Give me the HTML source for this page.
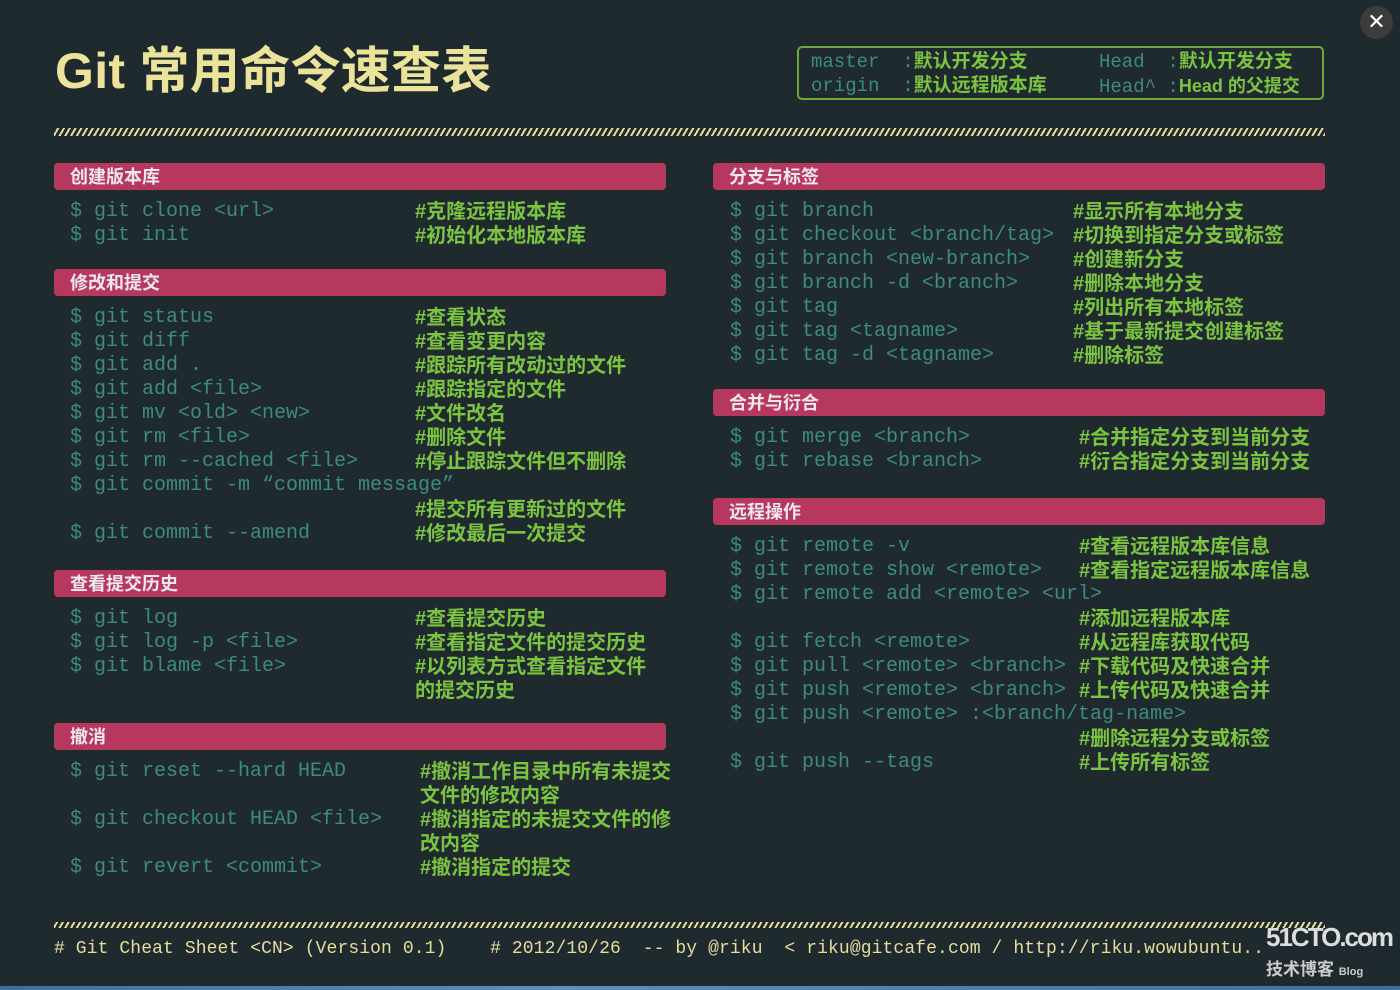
<!DOCTYPE html>
<html><head><meta charset="utf-8">
<style>
*{margin:0;padding:0;box-sizing:border-box}
html,body{width:1400px;height:990px;overflow:hidden;background:#1f2a2f}
body{position:relative;font-family:"Liberation Mono","Noto Sans CJK SC",monospace}
.t{position:absolute;left:55px;top:40px;font-family:"Liberation Sans","Noto Sans CJK SC",sans-serif;font-weight:bold;font-size:50px;color:#ece39b;letter-spacing:0.3px;line-height:62px}
.box{position:absolute;left:797px;top:46px;width:527px;height:54px;border:2px solid #6fa83e;border-radius:5px}
.bx{position:absolute;font-size:19px;line-height:24px;color:#3d8a82;white-space:pre}
.bx b{color:#7cc440;font-family:"Liberation Sans","Noto Sans CJK SC",sans-serif;font-weight:bold;font-size:19px}
.stripe{position:absolute;left:54px;width:1271px;height:8px;background:repeating-linear-gradient(-60deg,#e6dd9c 0 2px,transparent 2px 5px)}
.h{position:absolute;height:27px;background:#b7385f;border-radius:4px;color:#f2e8ee;font-family:"Liberation Sans","Noto Sans CJK SC",sans-serif;font-weight:bold;font-size:18px;line-height:28px;padding-left:16px}
.c{position:absolute;font-size:20px;line-height:24px;color:#3d8a82;white-space:pre;height:24px;margin-top:2px}
.m{position:absolute;font-family:"Liberation Sans","Noto Sans CJK SC",sans-serif;font-weight:bold;font-size:20px;line-height:24px;color:#7cc440;white-space:pre;margin-top:2px}
.f{position:absolute;top:937px;font-size:18px;line-height:24px;color:#e6dd9c;white-space:pre}
.x{position:absolute;left:1360px;top:6px;width:33px;height:33px;border-radius:50%;background:#3b3d3c;color:#fff;font-family:"DejaVu Sans",sans-serif;font-size:22px;line-height:33px;text-align:center}
</style></head><body>
<div class="t">Git 常用命令速查表</div>
<div class="box"></div>
<div class="bx" style="left:811px;top:50px">master  :<b>默认开发分支</b></div>
<div class="bx" style="left:811px;top:74px">origin  :<b>默认远程版本库</b></div>
<div class="bx" style="left:1099px;top:50px">Head  :<b>默认开发分支</b></div>
<div class="bx" style="left:1099px;top:74px">Head^ :<b style="font-size:18px">Head 的父提交</b></div>
<div class="x">✕</div>
<div class="stripe" style="top:128px"></div>

<div class="h" style="left:54px;top:163px;width:612px">创建版本库</div>
<div class="c" style="left:70px;top:198px">$ git clone &lt;url&gt;</div><div class="m" style="left:415px;top:198px">#克隆远程版本库</div>
<div class="c" style="left:70px;top:222px">$ git init</div><div class="m" style="left:415px;top:222px">#初始化本地版本库</div>

<div class="h" style="left:54px;top:269px;width:612px">修改和提交</div>
<div class="c" style="left:70px;top:304px">$ git status</div><div class="m" style="left:415px;top:304px">#查看状态</div>
<div class="c" style="left:70px;top:328px">$ git diff</div><div class="m" style="left:415px;top:328px">#查看变更内容</div>
<div class="c" style="left:70px;top:352px">$ git add .</div><div class="m" style="left:415px;top:352px">#跟踪所有改动过的文件</div>
<div class="c" style="left:70px;top:376px">$ git add &lt;file&gt;</div><div class="m" style="left:415px;top:376px">#跟踪指定的文件</div>
<div class="c" style="left:70px;top:400px">$ git mv &lt;old&gt; &lt;new&gt;</div><div class="m" style="left:415px;top:400px">#文件改名</div>
<div class="c" style="left:70px;top:424px">$ git rm &lt;file&gt;</div><div class="m" style="left:415px;top:424px">#删除文件</div>
<div class="c" style="left:70px;top:448px">$ git rm --cached &lt;file&gt;</div><div class="m" style="left:415px;top:448px">#停止跟踪文件但不删除</div>
<div class="c" style="left:70px;top:472px">$ git commit -m “commit message”</div>
<div class="m" style="left:415px;top:496px">#提交所有更新过的文件</div>
<div class="c" style="left:70px;top:520px">$ git commit --amend</div><div class="m" style="left:415px;top:520px">#修改最后一次提交</div>

<div class="h" style="left:54px;top:570px;width:612px">查看提交历史</div>
<div class="c" style="left:70px;top:605px">$ git log</div><div class="m" style="left:415px;top:605px">#查看提交历史</div>
<div class="c" style="left:70px;top:629px">$ git log -p &lt;file&gt;</div><div class="m" style="left:415px;top:629px">#查看指定文件的提交历史</div>
<div class="c" style="left:70px;top:653px">$ git blame &lt;file&gt;</div><div class="m" style="left:415px;top:653px">#以列表方式查看指定文件</div>
<div class="m" style="left:415px;top:677px">的提交历史</div>

<div class="h" style="left:54px;top:723px;width:612px">撤消</div>
<div class="c" style="left:70px;top:758px">$ git reset --hard HEAD</div><div class="m" style="left:420px;top:758px">#撤消工作目录中所有未提交</div>
<div class="m" style="left:420px;top:782px">文件的修改内容</div>
<div class="c" style="left:70px;top:806px">$ git checkout HEAD &lt;file&gt;</div><div class="m" style="left:420px;top:806px">#撤消指定的未提交文件的修</div>
<div class="m" style="left:420px;top:830px">改内容</div>
<div class="c" style="left:70px;top:854px">$ git revert &lt;commit&gt;</div><div class="m" style="left:420px;top:854px">#撤消指定的提交</div>

<div class="h" style="left:713px;top:163px;width:612px">分支与标签</div>
<div class="c" style="left:730px;top:198px">$ git branch</div><div class="m" style="left:1073px;top:198px">#显示所有本地分支</div>
<div class="c" style="left:730px;top:222px">$ git checkout &lt;branch/tag&gt;</div><div class="m" style="left:1073px;top:222px">#切换到指定分支或标签</div>
<div class="c" style="left:730px;top:246px">$ git branch &lt;new-branch&gt;</div><div class="m" style="left:1073px;top:246px">#创建新分支</div>
<div class="c" style="left:730px;top:270px">$ git branch -d &lt;branch&gt;</div><div class="m" style="left:1073px;top:270px">#删除本地分支</div>
<div class="c" style="left:730px;top:294px">$ git tag</div><div class="m" style="left:1073px;top:294px">#列出所有本地标签</div>
<div class="c" style="left:730px;top:318px">$ git tag &lt;tagname&gt;</div><div class="m" style="left:1073px;top:318px">#基于最新提交创建标签</div>
<div class="c" style="left:730px;top:342px">$ git tag -d &lt;tagname&gt;</div><div class="m" style="left:1073px;top:342px">#删除标签</div>

<div class="h" style="left:713px;top:389px;width:612px">合并与衍合</div>
<div class="c" style="left:730px;top:424px">$ git merge &lt;branch&gt;</div><div class="m" style="left:1079px;top:424px">#合并指定分支到当前分支</div>
<div class="c" style="left:730px;top:448px">$ git rebase &lt;branch&gt;</div><div class="m" style="left:1079px;top:448px">#衍合指定分支到当前分支</div>

<div class="h" style="left:713px;top:498px;width:612px">远程操作</div>
<div class="c" style="left:730px;top:533px">$ git remote -v</div><div class="m" style="left:1079px;top:533px">#查看远程版本库信息</div>
<div class="c" style="left:730px;top:557px">$ git remote show &lt;remote&gt;</div><div class="m" style="left:1079px;top:557px">#查看指定远程版本库信息</div>
<div class="c" style="left:730px;top:581px">$ git remote add &lt;remote&gt; &lt;url&gt;</div>
<div class="m" style="left:1079px;top:605px">#添加远程版本库</div>
<div class="c" style="left:730px;top:629px">$ git fetch &lt;remote&gt;</div><div class="m" style="left:1079px;top:629px">#从远程库获取代码</div>
<div class="c" style="left:730px;top:653px">$ git pull &lt;remote&gt; &lt;branch&gt;</div><div class="m" style="left:1079px;top:653px">#下载代码及快速合并</div>
<div class="c" style="left:730px;top:677px">$ git push &lt;remote&gt; &lt;branch&gt;</div><div class="m" style="left:1079px;top:677px">#上传代码及快速合并</div>
<div class="c" style="left:730px;top:701px">$ git push &lt;remote&gt; :&lt;branch/tag-name&gt;</div>
<div class="m" style="left:1079px;top:725px">#删除远程分支或标签</div>
<div class="c" style="left:730px;top:749px">$ git push --tags</div><div class="m" style="left:1079px;top:749px">#上传所有标签</div>

<div class="stripe" style="top:922px;height:6px"></div>
<div class="f" style="left:54px;letter-spacing:0.1px"># Git Cheat Sheet &lt;CN&gt; (Version 0.1)    # 2012/10/26  -- by @riku  &lt; riku@gitcafe.com / http://riku.wowubuntu..</div>
<div style="position:absolute;left:1266px;top:922px;font-family:'Liberation Sans',sans-serif;font-weight:bold;font-size:26px;color:#ddd;letter-spacing:-2px">51CTO.com</div>
<div style="position:absolute;left:1266px;top:955px;font-family:'Liberation Sans','Noto Sans CJK SC',sans-serif;font-weight:bold;font-size:17px;color:#ccc">技术博客 <span style="font-size:11px">Blog</span></div>
<div style="position:absolute;left:0;top:986px;width:1400px;height:4px;background:linear-gradient(90deg,#3a6fa0,#5a8fc0 40%,#3a6fa0)"></div>
</body></html>
